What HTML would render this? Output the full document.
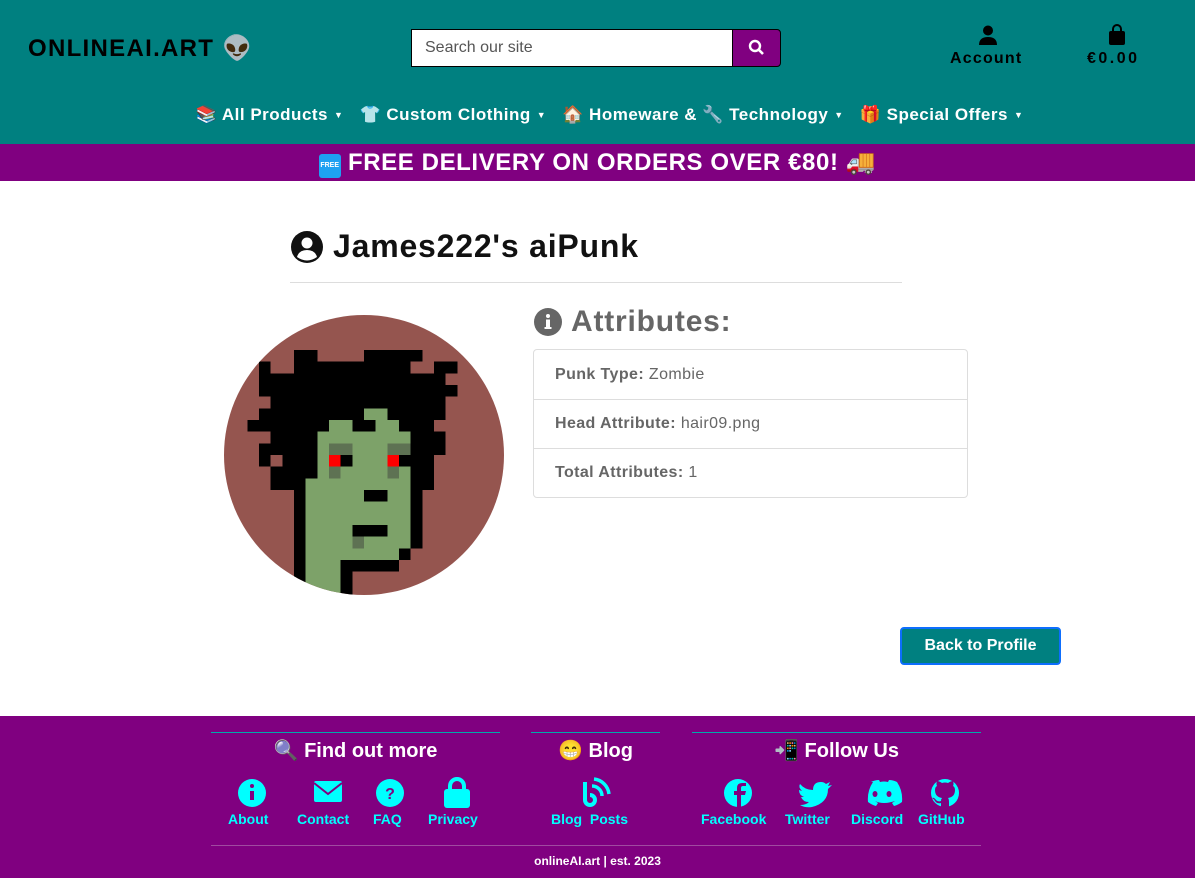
<!DOCTYPE html>
<html><head><meta charset="utf-8"><style>
*{box-sizing:border-box;margin:0;padding:0}
body{width:1195px;height:878px;overflow:hidden;background:#fff;font-family:"Liberation Sans","Noto Sans CJK JP",sans-serif;position:relative}
.abs{position:absolute}
header{position:absolute;left:0;top:0;width:1195px;height:144px;background:#008080}
.logo{left:28px;top:34px;font-size:24px;font-weight:bold;color:#000;letter-spacing:1.3px}
.search{left:411px;top:29px;width:322px;height:38px;background:#fff;border:1px solid #000;font-size:16px;color:#555;padding:9px 13px}
.sbtn{left:732px;top:29px;width:49px;height:38px;background:#800080;border:1px solid #000;border-radius:0 4px 4px 0}
.nav{top:105px;left:0;width:1195px;text-align:center;color:#fff;font-weight:bold;font-size:17px;white-space:nowrap;letter-spacing:0.5px;padding-left:24px}
.nav span{margin:0 8px}
.nav small{font-size:9px;margin-left:6px;vertical-align:2px}
.banner{left:0;top:144px;width:1195px;height:37px;background:#800080;color:#fff;font-weight:bold;font-size:24px;text-align:center;line-height:37px;letter-spacing:0.6px}
.free{display:inline-block;width:22px;height:24px;background:#1ea1f2;border-radius:3px;color:#fff;font-size:7px;line-height:24px;vertical-align:3px;letter-spacing:0;text-align:center}
h1{position:absolute;left:290px;top:228px;font-size:32px;font-weight:bold;color:#111;letter-spacing:0.8px}
.hr{left:290px;top:282px;width:612px;height:1px;background:#ddd}
.attr{left:533px;top:305px;font-size:30px;font-weight:bold;color:#666;letter-spacing:0.8px}
table{position:absolute;left:533px;top:349px;width:435px;border:1px solid #ddd;border-radius:4px;border-collapse:separate;border-spacing:0;font-size:16px;color:#666;letter-spacing:0.4px}
td{height:49px;padding:0 21px;border-top:1px solid #ddd}
tr:first-child td{border-top:none}
.btn{left:900px;top:627px;width:161px;height:38px;background:#008080;border:2px solid #0d6efd;border-radius:4px;color:#fff;font-weight:bold;font-size:16px;text-align:center;line-height:34px}
footer{position:absolute;left:0;top:716px;width:1195px;height:162px;background:#800080;color:#fff}
.fl{height:1px;background:#0aa}
.fh{font-size:20px;font-weight:bold;color:#fff;text-align:center}
.it{text-align:center;color:#00ffff;font-size:14px;font-weight:bold}
</style></head><body>
<header>
<div class="abs logo">ONLINEAI.ART 👽</div>
<div class="abs search">Search our site</div>
<div class="abs sbtn"><svg width="47" height="36" viewBox="0 0 47 36"><circle cx="22" cy="16" r="5" fill="none" stroke="#fff" stroke-width="2.4"/><line x1="26" y1="20" x2="30" y2="24" stroke="#fff" stroke-width="2.6"/></svg></div>
<svg class="abs" style="left:978px;top:25px" width="20" height="20" viewBox="0 0 20 20"><circle cx="10" cy="5.5" r="5" fill="#000"/><path d="M1 20 Q1 12 10 12 Q19 12 19 20Z" fill="#000"/></svg>
<div class="abs" style="left:950px;top:50px;font-size:16px;font-weight:bold;letter-spacing:1.2px">Account</div>
<svg class="abs" style="left:1108px;top:24px" width="18" height="22" viewBox="0 0 18 22"><path d="M5 8V5a4 4 0 0 1 8 0v3" fill="none" stroke="#000" stroke-width="2"/><rect x="1" y="7" width="16" height="14" rx="2" fill="#000"/></svg>
<div class="abs" style="left:1087px;top:50px;font-size:16px;font-weight:bold;letter-spacing:2.5px">€0.00</div>
<div class="abs nav"><span>📚 All Products<small>▼</small></span><span>👕 Custom Clothing<small>▼</small></span><span>🏠 Homeware &amp; 🔧 Technology<small>▼</small></span><span>🎁 Special Offers<small>▼</small></span></div>
</header>
<div class="abs banner"><span class="free">FREE</span> FREE DELIVERY ON ORDERS OVER €80! 🚚</div>
<svg class="abs" style="left:291px;top:231px" width="32" height="32" viewBox="0 0 32 32"><circle cx="16" cy="16" r="16" fill="#111"/><circle cx="16" cy="12" r="5.5" fill="#fff"/><path d="M6 26 Q8 19 16 19 Q24 19 26 26 Q16 33 6 26Z" fill="#fff"/></svg>
<h1 style="left:333px">James222's aiPunk</h1>
<div class="abs hr"></div>
<svg class="abs" style="left:534px;top:308px" width="28" height="28" viewBox="0 0 28 28"><circle cx="14" cy="14" r="14" fill="#666"/><circle cx="14" cy="8" r="2" fill="#fff"/><rect x="12" y="11.5" width="4" height="9" fill="#fff"/><rect x="10.5" y="19" width="7" height="2" fill="#fff"/></svg>
<div class="abs attr" style="left:571px">Attributes:</div>
<table>
<tr><td><b>Punk Type:</b> Zombie</td></tr>
<tr><td><b>Head Attribute:</b> hair09.png</td></tr>
<tr><td><b>Total Attributes:</b> 1</td></tr>
</table>
<svg class="abs" style="left:224px;top:315px" width="280" height="280" viewBox="0 0 24 24" shape-rendering="crispEdges">
<defs><clipPath id="c"><circle cx="12" cy="12" r="12"/></clipPath></defs>
<g clip-path="url(#c)">
<rect width="24" height="24" fill="#95554f"/>
<g fill="#7da269"><rect x="12" y="8" width="2" height="1"/><rect x="9" y="9" width="2" height="1"/><rect x="13" y="9" width="2" height="1"/><rect x="8" y="10" width="8" height="4"/><rect x="7" y="14" width="9" height="6"/><rect x="7" y="20" width="8" height="1"/><rect x="7" y="21" width="3" height="3"/></g>
<g fill="#000"><rect x="6" y="3" width="2" height="1"/><rect x="12" y="3" width="5" height="1"/><rect x="3" y="4" width="1" height="1"/><rect x="6" y="4" width="10" height="1"/><rect x="18" y="4" width="2" height="1"/><rect x="3" y="5" width="16" height="1"/><rect x="3" y="6" width="17" height="1"/><rect x="4" y="7" width="15" height="1"/><rect x="3" y="8" width="9" height="1"/><rect x="14" y="8" width="5" height="1"/><rect x="2" y="9" width="7" height="1"/><rect x="11" y="9" width="2" height="1"/><rect x="15" y="9" width="3" height="1"/><rect x="4" y="10" width="4" height="1"/><rect x="16" y="10" width="3" height="1"/><rect x="3" y="11" width="5" height="1"/><rect x="16" y="11" width="3" height="1"/><rect x="3" y="12" width="1" height="1"/><rect x="5" y="12" width="3" height="1"/><rect x="10" y="12" width="1" height="1"/><rect x="15" y="12" width="3" height="1"/><rect x="4" y="13" width="4" height="1"/><rect x="16" y="13" width="2" height="1"/><rect x="4" y="14" width="3" height="1"/><rect x="16" y="14" width="2" height="1"/><rect x="6" y="15" width="1" height="9"/><rect x="16" y="15" width="1" height="5"/><rect x="12" y="15" width="2" height="1"/><rect x="11" y="18" width="3" height="1"/><rect x="15" y="20" width="1" height="1"/><rect x="10" y="21" width="5" height="1"/><rect x="10" y="22" width="1" height="2"/></g>
<g fill="#5e7253"><rect x="9" y="11" width="2" height="1"/><rect x="14" y="11" width="2" height="1"/><rect x="9" y="13" width="1" height="1"/><rect x="14" y="13" width="1" height="1"/><rect x="11" y="19" width="1" height="1"/></g>
<g fill="#f00"><rect x="9" y="12" width="1" height="1"/><rect x="14" y="12" width="1" height="1"/></g>
</g></svg>
<div class="abs btn">Back to Profile</div>
<footer>
<div class="abs fl" style="left:211px;top:16px;width:289px"></div>
<div class="abs fl" style="left:531px;top:16px;width:129px"></div>
<div class="abs fl" style="left:692px;top:16px;width:289px"></div>
<div class="abs fh" style="left:211px;top:22px;width:289px">🔍 Find out more</div>
<div class="abs fh" style="left:531px;top:22px;width:129px">😁 Blog</div>
<div class="abs fh" style="left:692px;top:22px;width:289px">📲 Follow Us</div>
<svg class="abs" style="left:0;top:60px" width="1195" height="34" viewBox="0 0 1195 34" fill="#00ffff">
<circle cx="252" cy="17" r="14"/><rect x="250" y="15" width="4" height="9" fill="#800080"/><circle cx="252" cy="10" r="2" fill="#800080"/>
<rect x="314" y="5" width="28" height="21" rx="2"/><path d="M314 7 L328 18 L342 7" fill="none" stroke="#800080" stroke-width="2"/>
<circle cx="390" cy="17" r="14"/><text x="390" y="23" fill="#800080" font-size="16" font-weight="bold" text-anchor="middle" font-family="Liberation Sans">?</text>
<path d="M450 14V10a7 7 0 0 1 14 0v4" fill="none" stroke="#00ffff" stroke-width="4"/><rect x="444" y="13" width="26" height="19" rx="3"/>
<path d="M585 6 V24 a5 5 0 1 0 5 -5" fill="none" stroke="#00ffff" stroke-width="4"/><path d="M592 10a10 10 0 0 1 10 10M594 3a17 17 0 0 1 15 15" fill="none" stroke="#00ffff" stroke-width="3.5"/>
<circle cx="738" cy="17" r="14"/><path d="M741 32V19h4l1-4h-5v-3q0-2 2-2h3V7h-4q-5 0-5 5v3h-3v4h3v13z" fill="#800080"/>
<path d="M800 8q5 6 13 6q0-8 8-8q3 0 5 2l4-2-2 4 4-1-4 4q0 14-16 18q-7 1-12-2q6 0 9-3q-6 0-8-5h3q-5-2-5-7l3 1q-4-4-2-7z"/>
<path d="M871 6q4-2 8-2l1 2q4-1 8 0l1-2q4 0 8 2q6 9 5 20q-4 3-8 4l-2-3 3-2q-12 4-20 0l3 2-2 3q-4-1-8-4q-1-11 5-20z"/><ellipse cx="875" cy="18" rx="2.5" ry="3" fill="#800080"/><ellipse cx="889" cy="18" rx="2.5" ry="3" fill="#800080"/>
<circle cx="945" cy="17" r="14"/><path d="M941 32v-5q-4 1-6-2-1-2-3-3 2-1 4 2 2 2 5 1 0-2 1-3-7-1-7-8 0-3 2-4-1-2 0-5 2 0 5 2 3-1 6 0 3-2 5-2 1 3 0 5 2 1 2 4 0 7-7 8 1 1 1 4v6z" fill="#800080"/>
</svg>
<div class="abs it" style="left:228px;top:95px">About</div>
<div class="abs it" style="left:297px;top:95px">Contact</div>
<div class="abs it" style="left:373px;top:95px">FAQ</div>
<div class="abs it" style="left:428px;top:95px">Privacy</div>
<div class="abs it" style="left:551px;top:95px">Blog&nbsp; Posts</div>
<div class="abs it" style="left:701px;top:95px">Facebook</div>
<div class="abs it" style="left:785px;top:95px">Twitter</div>
<div class="abs it" style="left:851px;top:95px">Discord</div>
<div class="abs it" style="left:918px;top:95px">GitHub</div>
<div class="abs fl" style="left:211px;top:129px;width:770px;background:#a04aa0"></div>
<div class="abs" style="left:0;top:138px;width:1195px;text-align:center;font-size:12px;font-weight:bold">onlineAI.art | est. 2023</div>
</footer>
</body></html>
